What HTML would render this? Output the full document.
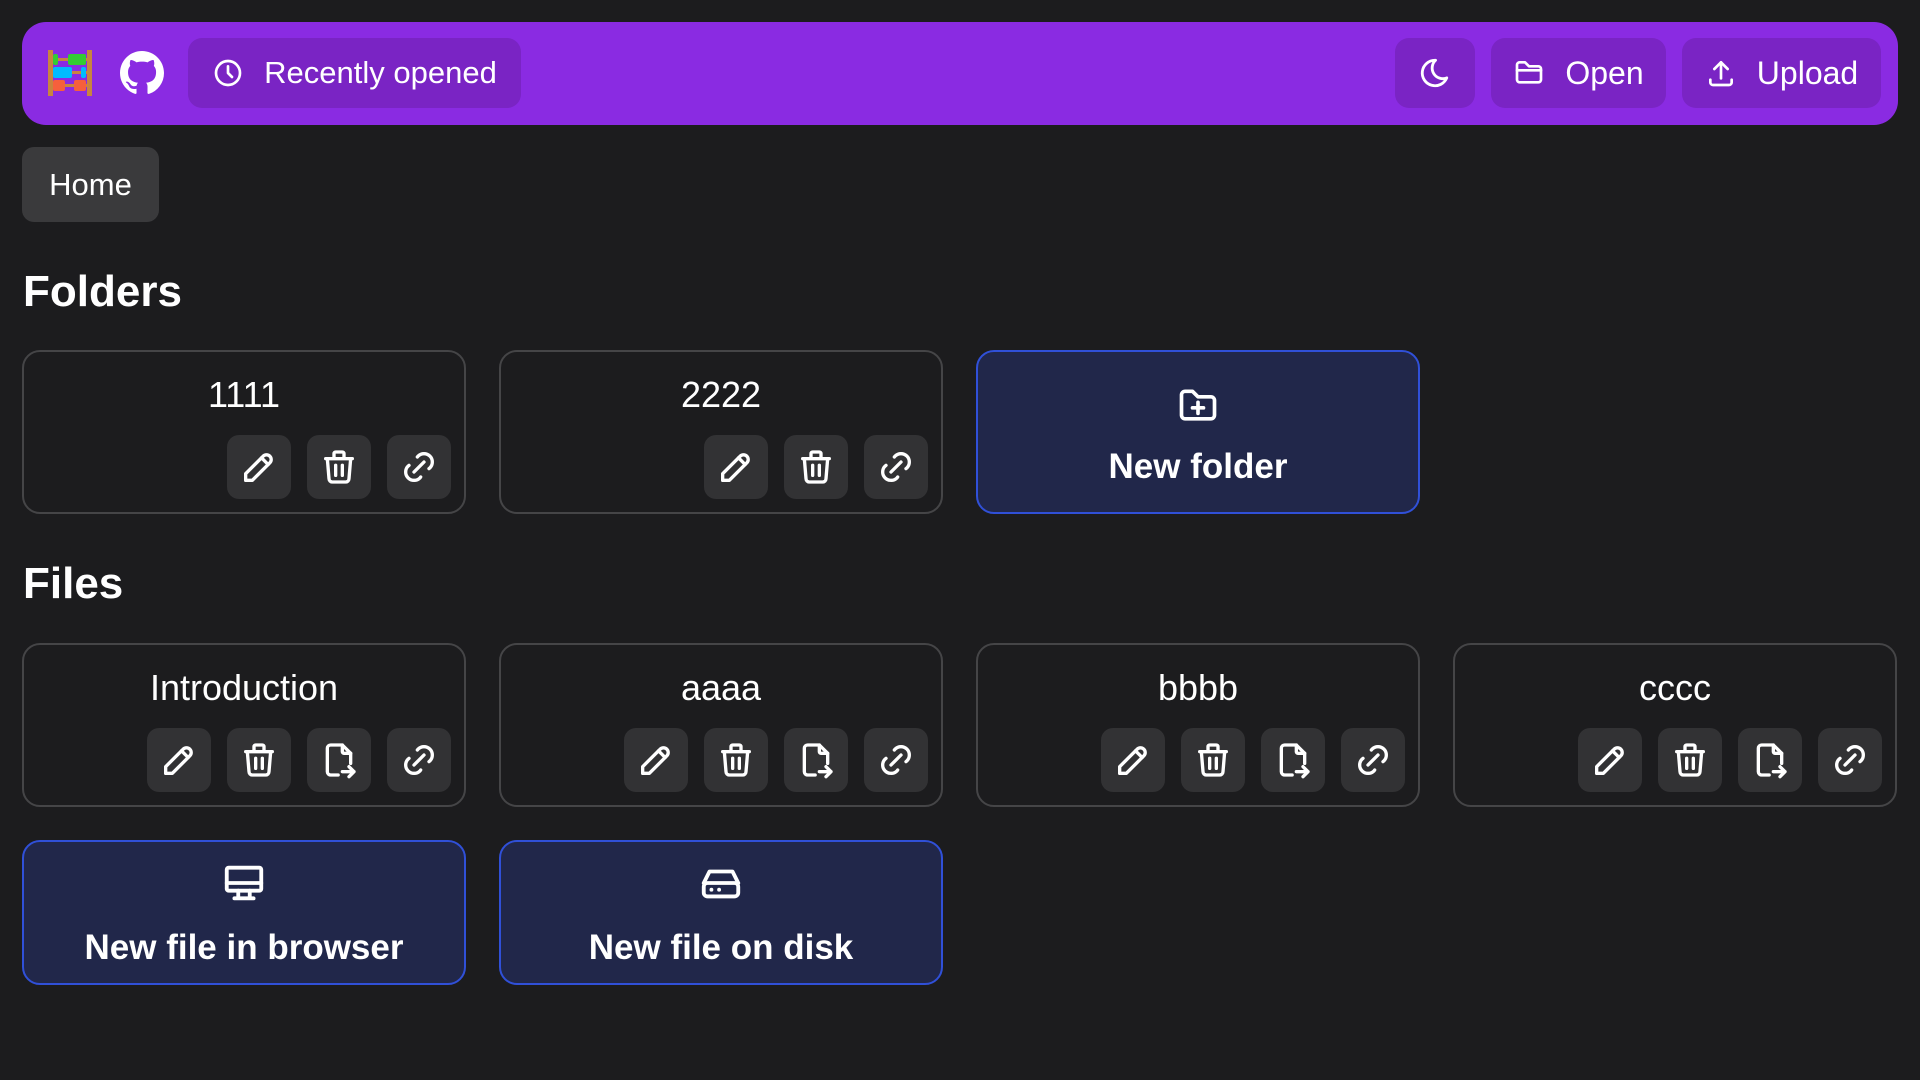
<!DOCTYPE html>
<html><head><meta charset="utf-8"><style>
*{box-sizing:border-box;margin:0;padding:0}
body{width:1920px;height:1080px;background:#1c1c1e;font-family:"Liberation Sans",sans-serif;color:#fff;position:relative;overflow:hidden}
.abs{position:absolute}
.hdr{left:22px;top:22px;width:1876px;height:103px;background:#8a2be2;border-radius:24px}
.hb{position:absolute;background:#7a24c4;border-radius:14px;height:70px;top:38px;display:flex;align-items:center;justify-content:center;font-size:32px;gap:20px}
.home{left:22px;top:147px;width:137px;height:75px;background:#3a3a3c;border-radius:12px;font-size:31px;display:flex;align-items:center;justify-content:center}
h2{position:absolute;left:23px;font-size:44px;font-weight:bold}
.card{position:absolute;width:444px;height:164px;border:2px solid #454547;border-radius:18px}
.card .t{position:absolute;left:0;right:0;top:22px;text-align:center;font-size:36px}
.acts{position:absolute;right:13px;bottom:13px;display:flex;gap:16px}
.ab{width:64px;height:64px;background:#323234;border-radius:12px;display:flex;align-items:center;justify-content:center}
.new{position:absolute;width:444px;background:#21274a;border:2px solid #3050d8;border-radius:18px;text-align:center;font-weight:bold;font-size:35px}
svg{fill:none;stroke:#fff;stroke-width:2;stroke-linecap:round;stroke-linejoin:round}
</style></head><body>
<div class="abs hdr"></div>
<svg class="abs" style="left:44px;top:48px;stroke:none" width="52" height="50" viewBox="0 0 50 50">
<rect x="3" y="2" width="5" height="46" fill="#c8843f"/><rect x="42" y="2" width="5" height="46" fill="#c8843f"/>
<rect x="8" y="10" width="34" height="3" fill="#c8843f"/><rect x="8" y="23" width="34" height="3" fill="#c8843f"/><rect x="8" y="36" width="34" height="3" fill="#c8843f"/>
<rect x="8" y="6" width="5" height="11" rx="2" fill="#3c3"/><rect x="23" y="6" width="18" height="11" rx="2" fill="#3c3"/>
<rect x="8" y="19" width="19" height="11" rx="2" fill="#0bf"/><rect x="36" y="19" width="5" height="11" rx="2" fill="#0bf"/>
<rect x="8" y="32" width="12" height="11" rx="2" fill="#f65f3c"/><rect x="29" y="32" width="12" height="11" rx="2" fill="#f65f3c"/>
</svg>
<svg class="abs" style="left:120px;top:51px;stroke:none;fill:#fff" width="44" height="44" viewBox="0 0 16 16"><path d="M8 0C3.58 0 0 3.580 0 8c0 3.54 2.290 6.53 5.470 7.59.4.07.55-.17.55-.38 0-.19-.01-.82-.01-1.49-2.010.37-2.530-.49-2.690-.94-.09-.23-.48-.94-.82-1.13-.28-.15-.68-.52-.01-.53.63-.01 1.080.58 1.230.82.72 1.210 1.870.87 2.330.66.07-.52.28-.87.51-1.07-1.780-.2-3.640-.89-3.640-3.95 0-.87.31-1.590.82-2.150-.08-.2-.36-1.020.08-2.120 0 0 .67-.21 2.2.82.64-.18 1.320-.27 2-.27.68 0 1.360.09 2 .27 1.530-1.040 2.2-.82 2.2-.82.44 1.1.16 1.920.08 2.120.51.56.82 1.270.82 2.150 0 3.070-1.870 3.750-3.650 3.950.29.25.54.73.54 1.480 0 1.070-.01 1.930-.01 2.2 0 .21.15.46.55.38A8.013 8.013 0 0016 8c0-4.420-3.580-8-8-8z"/></svg>
<div class="hb" style="left:188px;width:333px;font-size:31px"><svg width="32" height="32" viewBox="0 0 24 24"><circle cx="12" cy="12" r="9"/><path d="M12 7v5l3 3"/></svg><span>Recently opened</span></div>
<div class="hb" style="left:1395px;width:80px"><svg width="34" height="34" viewBox="0 0 24 24"><path d="M12 3c.132 0 .263 0 .393 0a7.5 7.5 0 0 0 7.92 12.446a9 9 0 1 1 -8.313 -12.454z"/></svg></div>
<div class="hb" style="left:1491px;width:175px"><svg width="32" height="32" viewBox="0 0 24 24"><path d="M5 4h4l3 3h7a2 2 0 0 1 2 2v8a2 2 0 0 1 -2 2h-14a2 2 0 0 1 -2 -2v-11a2 2 0 0 1 2 -2"/><path d="M3 10h18"/></svg><span>Open</span></div>
<div class="hb" style="left:1682px;width:199px"><svg width="32" height="32" viewBox="0 0 24 24"><path d="M4 17v2a2 2 0 0 0 2 2h12a2 2 0 0 0 2 -2v-2"/><path d="M7 9l5 -5l5 5"/><path d="M12 4v12"/></svg><span>Upload</span></div>
<div class="abs home">Home</div>
<h2 style="top:267px">Folders</h2>
<h2 style="top:559px">Files</h2>

<div class="card" style="left:22px;top:350px"><div class="t">1111</div><div class="acts"><div class="ab">P</div><div class="ab">T</div><div class="ab">L</div></div></div>
<div class="card" style="left:499px;top:350px"><div class="t">2222</div><div class="acts"><div class="ab">P</div><div class="ab">T</div><div class="ab">L</div></div></div>
<div class="new" style="left:976px;top:350px;height:164px"><svg style="margin-top:32px" width="44" height="44" viewBox="0 0 24 24"><path d="M5 4h4l3 3h7a2 2 0 0 1 2 2v8a2 2 0 0 1 -2 2h-14a2 2 0 0 1 -2 -2v-11a2 2 0 0 1 2 -2"/><path d="M12 10v6M9 13h6"/></svg><div style="margin-top:10px">New folder</div></div>

<div class="card" style="left:22px;top:643px"><div class="t">Introduction</div><div class="acts"><div class="ab">P</div><div class="ab">T</div><div class="ab">M</div><div class="ab">L</div></div></div>
<div class="card" style="left:499px;top:643px"><div class="t">aaaa</div><div class="acts"><div class="ab">P</div><div class="ab">T</div><div class="ab">M</div><div class="ab">L</div></div></div>
<div class="card" style="left:976px;top:643px"><div class="t">bbbb</div><div class="acts"><div class="ab">P</div><div class="ab">T</div><div class="ab">M</div><div class="ab">L</div></div></div>
<div class="card" style="left:1453px;top:643px"><div class="t">cccc</div><div class="acts"><div class="ab">P</div><div class="ab">T</div><div class="ab">M</div><div class="ab">L</div></div></div>

<div class="new" style="left:22px;top:840px;height:145px"><svg style="margin-top:18px" width="46" height="46" viewBox="0 0 24 24"><rect x="3" y="4" width="18" height="12" rx="1"/><path d="M3 12h18M7 20h10M9 16v4M15 16v4"/></svg><div style="margin-top:13px">New file in browser</div></div>
<div class="new" style="left:499px;top:840px;height:145px"><svg style="margin-top:18px" width="46" height="46" viewBox="0 0 24 24"><path d="M3 12l3-6h12l3 6"/><rect x="3" y="12" width="18" height="7" rx="2"/><path d="M7 15.5h.01M11 15.5h.01"/></svg><div style="margin-top:13px">New file on disk</div></div>

<script>
const I={
P:'<path d="M4 20h4l10.5 -10.5a2.828 2.828 0 1 0 -4 -4l-10.5 10.5v4"/><path d="M13.5 6.5l4 4"/>',
T:'<path d="M4 7h16M10 11v6M14 11v6M5 7l1 12a2 2 0 0 0 2 2h8a2 2 0 0 0 2 -2l1 -12M9 7v-3a1 1 0 0 1 1 -1h4a1 1 0 0 1 1 1v3"/>',
M:'<path d="M14 3v4a1 1 0 0 0 1 1h4"/><path d="M11.5 21h-4.5a2 2 0 0 1 -2 -2v-14a2 2 0 0 1 2 -2h7l5 5v6"/><path d="M14 19h7M18 16l3 3l-3 3"/>',
L:'<path d="M9 15l6 -6"/><path d="M11 6l.463 -.536a5 5 0 0 1 7.071 7.072l-.534 .464"/><path d="M13 18l-.397 .534a5.068 5.068 0 0 1 -7.127 0a4.972 4.972 0 0 1 0 -7.071l.524 -.463"/>'};
document.querySelectorAll('.ab').forEach(b=>{const k=b.textContent;b.innerHTML='<svg width="40" height="40" viewBox="0 0 24 24">'+I[k]+'</svg>';});
</script>
</body></html>
